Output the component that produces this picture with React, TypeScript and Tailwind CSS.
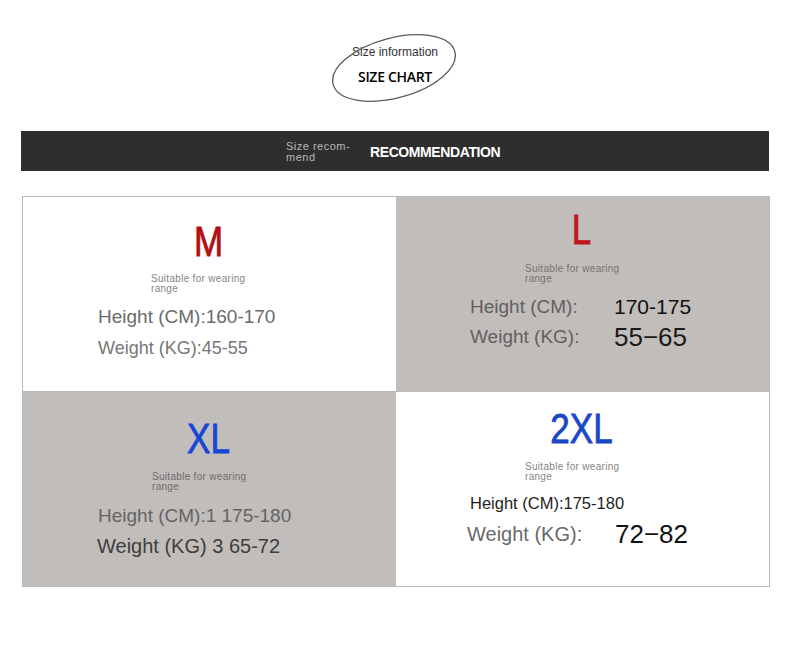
const sans = { fontFamily: '"Liberation Sans", Arial, sans-serif' };

function Suitable({ className = "" }: { className?: string }) {
  return (
    <div className={`text-[10px] leading-[10px] tracking-[0.3px] ${className}`}>
      Suitable for wearing
      <br />
      range
    </div>
  );
}

const big = "text-center text-[35px] leading-[42px] pr-[2px] scale-y-[1.2] [-webkit-text-stroke:0.7px]";

export default function App() {
  return (
    <div className="w-[790px] h-[672px] bg-white" style={sans}>
      {/* title with ellipse */}
      <div className="pt-[34px] flex justify-center">
        <div className="relative w-[130px] h-[68px] flex flex-col items-center">
          <svg
            className="absolute left-[-2px] top-[-2px]"
            width="134"
            height="72"
            viewBox="0 0 134 72"
          >
            <ellipse
              cx="66"
              cy="36"
              rx="63"
              ry="30"
              transform="rotate(-15 66 36)"
              fill="none"
              stroke="#5a5a5a"
              strokeWidth="1.3"
            />
          </svg>
          <div className="mt-[10px] text-[12px] leading-[16px] text-[#333]">Size information</div>
          <div
            className="mt-[8px] text-[14px] leading-[18px] font-semibold text-black tracking-[-0.3px]"
            style={{ fontFamily: '"Open Sans", sans-serif' }}
          >
            SIZE CHART
          </div>
        </div>
      </div>

      {/* dark bar */}
      <div className="mx-[21px] mt-[29px] h-[40px] bg-[#2e2e2e] flex items-center pl-[265px]">
        <div className="text-[11px] leading-[11px] tracking-[0.5px] text-[#b8b8b8] w-[84px] pt-[1px]">
          Size recom-
          <br />
          mend
        </div>
        <div className="text-[14px] font-bold text-white tracking-[-0.4px] pt-[3px]">RECOMMENDATION</div>
      </div>

      {/* grid */}
      <div className="ml-[22px] mr-[20px] mt-[25px] grid grid-cols-2 border border-[#b9b9b9]">
        {/* M */}
        <div className="h-[194px] bg-white flex flex-col pt-[24px]">
          <div className={`${big} text-[#b30f12]`}>M</div>
          <Suitable className="mt-[11px] ml-[128px] text-[#858585]" />
          <div className="mt-[12px] ml-[75px] text-[19px] leading-[22px] text-[#6b6b6b]">Height (CM):160-170</div>
          <div className="mt-[9px] ml-[75px] text-[18px] leading-[22px] text-[#777]">Weight (KG):45-55</div>
        </div>
        {/* L */}
        <div className="h-[194px] bg-[#c1bdba] flex flex-col pt-[12px]">
          <div className={`${big} text-[#c0161a]`}>L</div>
          <Suitable className="mt-[13px] ml-[129px] text-[#767371]" />
          <div className="mt-[10px] ml-[74px] h-[26px] flex items-center text-[19px] text-[#626060]">
            <span className="w-[144px]">Height (CM):</span>
            <span className="text-[21px] text-[#111]">170-175</span>
          </div>
          <div className="mt-[2px] ml-[74px] h-[30px] flex items-center text-[19px] text-[#626060]">
            <span className="w-[144px]">Weight (KG):</span>
            <span className="text-[26px] text-[#1a1a1a]">55−65</span>
          </div>
        </div>
        {/* XL */}
        <div className="h-[195px] bg-[#c1bdba] border-t border-[#b9b9b9] flex flex-col pt-[26px]">
          <div className={`${big} text-[#1746d6]`}>XL</div>
          <Suitable className="mt-[12px] ml-[129px] text-[#6f6c6a]" />
          <div className="mt-[13px] ml-[75px] text-[19px] leading-[22px] text-[#666463]">Height (CM):1 175-180</div>
          <div className="mt-[8px] ml-[74px] text-[20px] leading-[22px] text-[#3f3e3d]">Weight (KG) 3 65-72</div>
        </div>
        {/* 2XL */}
        <div className="h-[195px] bg-white border-t border-[#b9b9b9] flex flex-col pt-[16px]">
          <div className={`${big} text-[#1a47c6]`}>2XL</div>
          <Suitable className="mt-[12px] ml-[129px] text-[#858585]" />
          <div className="mt-[11px] ml-[74px] text-[16.5px] leading-[20px] text-[#1e1e1e]">Height (CM):175-180</div>
          <div className="mt-[6px] ml-[71px] h-[30px] flex items-center text-[20px] text-[#6a6a6a]">
            <span className="w-[148px]">Weight (KG):</span>
            <span className="text-[26px] text-[#111]">72−82</span>
          </div>
        </div>
      </div>
    </div>
  );
}
